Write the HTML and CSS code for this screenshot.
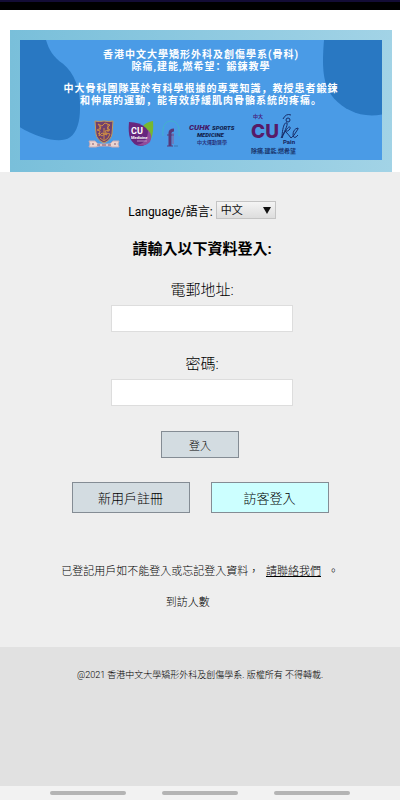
FILE: index.html
```html
<!DOCTYPE html>
<html lang="zh-Hant">
<head>
    <meta charset="UTF-8">
    <meta name="viewport" content="width=device-width, initial-scale=1.0">
    <title>登入</title>
    <link rel="stylesheet" href="styles.css">
</head>
<body>

    <div class="status-bar"></div>

    <!-- Banner -->
    <header class="banner">
        <div class="banner-inner">
            <svg class="banner-shapes" viewBox="0 0 362 121" preserveAspectRatio="none" aria-hidden="true">
                <path fill="#2978c2" d="M0 0H26C29 10 33 17 43 24C54 33 61 50 60 69C60 82 57 93 50 98C43 103 32 101 22 98C13 95 6 92 0 88Z"/>
                <path fill="#2978c2" d="M304 0H362V75C342 79 325 71 314 59C302 45 302 26 304 0Z"/>
            </svg>
            <p lang="zh-Hans">香港中文大學矯形外科及創傷學系(骨科)<br>除痛,建能,燃希望：鍛鍊教學</p>
            <p lang="zh-Hans">中大骨科團隊基於有科學根據的專業知識，教授患者鍛鍊<br>和伸展的運動，能有效紓緩肌肉骨骼系統的疼痛。</p>

            <div class="logos">
                <svg class="logo-crest" viewBox="0 0 32 28" role="img" aria-label="CUHK">
                    <path d="M7 1Q11 2 16 1Q21 2 25 1L24 14Q23 20 16 23Q9 20 8 14Z" fill="#70406d" stroke="#c39a5a"/>
                    <path d="M10 4l4 2 3-3 5 2-3 3 3 2-5 1 2 4-5-2-3 3 1-5-3-1 4-2zM10 13l4 3 4-3 4 1-2 4-4 3-4-3M12 5v5M20 4v8M16 8v12" fill="none" stroke="#cf8d43"/>
                    <path d="M1 21l6 0 3 3h12l3-3h6l-1 3 1 3-7 0-3-1H11l-3 1H1l1-3z" fill="#ead5d2" stroke="#c7acb6"/>
                    <path d="M4 24h2M9 25h3M14 25h4M20 25h3M26 24h2" stroke="#815671"/>
                </svg>
                <svg class="logo-medicine" viewBox="0 0 26 28" role="img" aria-label="CU Medicine">
                    <path d="M14 7Q18 2 25 1Q26 12 23 19Q20 24 14 25Z" fill="#76b82f"/>
                    <path d="M1 2Q12 2 18 8Q24 14 21 21Q18 26 12 26Q5 25 2 18Q0 12 1 2Z" fill="#67277e"/>
                    <path d="M20 10Q25 15 22 22Q17 27 9 25Q20 23 20 10Z" fill="#914b9b"/>
                    <text x="3" y="14" fill="#fff" font-size="9" font-weight="700">CU</text>
                    <text x="3" y="19" fill="#fff" font-size="4" font-weight="700">Medicine</text>
                    <path d="M9 21h10" stroke="#b78bc0"/>
                </svg>
                <svg class="logo-ortho" viewBox="0 0 18 28" fill="none" role="img" aria-label="Orthopaedics">
                    <path d="M1 16C0 5 4 1 9 1S18 5 17 16" stroke="#42b2cc"/>
                    <path d="M8 26V13Q8 10 12 10" stroke="#583879" stroke-width="3"/>
                    <path d="M5 15h7M5 26h6" stroke="#583879"/>
                    <path d="M11 13v11" stroke="#8c6199"/>
                    <path d="M12 26h4" stroke="#3977b2"/>
                </svg>
                <svg class="logo-sports" viewBox="0 0 48 24" role="img" aria-label="CUHK Sports Medicine">
                    <text x="1" y="8" fill="#451969" font-size="8" font-weight="900" font-style="italic">CUHK</text>
                    <text x="24" y="8" fill="#101d4c" font-size="6" font-weight="900" font-style="italic">SPORTS</text>
                    <text x="9" y="15" fill="#101d4c" font-size="6" font-weight="900" font-style="italic">MEDICINE</text>
                    <text x="9" y="22" fill="#293780" font-size="5" font-weight="700">中大運動醫學</text>
                </svg>
                <svg class="logo-cure" viewBox="0 0 52 42" role="img" aria-label="CURe Pain">
                    <text x="3" y="5" fill="#46257d" font-size="5" font-weight="700">中大</text>
                    <text class="cu" x="1" y="25" fill="#571a68" font-size="19" font-weight="800">CU</text>
                    <g fill="none" stroke="#172c68">
                        <path d="M33 6Q36 0 41 2M36 7q0-2 2-2t2 2-2 2-2-2"/>
                        <path d="M31 25C34 20 38 12 37 10C34 8 32 18 32 25C36 15 41 11 40 16Q38 19 35 18Q39 22 41 25Q44 23 46 19Q49 15 48 15Q43 16 43 22Q44 27 48 22"/>
                    </g>
                    <text x="33" y="31" fill="#14215a" font-size="6" font-weight="700">Pain</text>
                    <text x="1" y="40" fill="#19366e" font-size="6" font-weight="700">除痛,建能,燃希望</text>
                </svg>
            </div>
        </div>
    </header>

    <!-- Login form -->
    <main>
        <form class="login-form" id="login-form">
            <div class="language">
                <label for="language">Language/語言:</label>
                <div class="select-box">
                    <select id="language">
                        <option>中文</option>
                        <option>English</option>
                    </select>
                    <svg class="arrow" viewBox="0 0 8 8" aria-hidden="true"><path d="M0 1h8L4 8z" fill="#111"/></svg>
                </div>
            </div>

            <h1>請輸入以下資料登入:</h1>

            <label class="field-label" for="email">電郵地址:</label>
            <input type="email" id="email">

            <label class="field-label" for="password">密碼:</label>
            <input type="password" id="password">
        </form>

        <button type="submit" form="login-form" class="login">登入</button>

        <div class="actions">
            <button type="button">新用戶註冊</button>
            <button type="button" class="guest">訪客登入</button>
        </div>

        <p class="help">已登記用戶如不能登入或忘記登入資料， <a href="#">請聯絡我們</a> 。</p>
        <p class="visitors">到訪人數 <span class="count"></span></p>
    </main>

    <footer>@2021 香港中文大學矯形外科及創傷學系. 版權所有 不得轉載.</footer>

    <div class="nav-bar">
        <span></span>
        <span></span>
        <span></span>
    </div>

</body>
</html>
```
FILE: styles.css
```css
* {
    margin: 0;
    padding: 0;
    box-sizing: border-box;
}

body {
    font-family: Roboto, "Noto Sans CJK TC", sans-serif;
    font-weight: 300;
    background: #fff;
    color: #000;
    display: flex;
    flex-direction: column;
    min-height: 100vh;
}

.status-bar {
    height: 10px;
    background: #000;
    border-top: 2px solid #130c35;
}

/* Banner */
.banner {
    margin: 20px 8px 0 10px;
    padding: 10px 10px 12px;
    background: linear-gradient(to right, #79bfda, #a2d3e6);
}

.banner-inner {
    position: relative;
    padding-top: 9px;
    background: #4a9be6;
    color: #fff;
    text-align: center;
}

.banner-shapes {
    position: absolute;
    inset: 0;
    width: 100%;
    height: 100%;
}

.banner p {
    position: relative;
    margin-bottom: 10px;
    font-family: Roboto, "Noto Sans CJK SC", sans-serif;
    font-size: 10px;
    font-weight: 700;
    line-height: 12px;
    letter-spacing: 1px;
}

.logos {
    position: relative;
    display: flex;
    justify-content: center;
    align-items: center;
    gap: 8px;
    margin-top: -4px;
    padding: 0 12px 5px 0;
}

.logo-crest {
    width: 32px;
    height: 28px;
}

.logo-medicine {
    width: 26px;
    height: 28px;
}

.logo-ortho {
    width: 18px;
    height: 28px;
}

.logo-sports {
    width: 48px;
    height: 24px;
}

.logo-cure {
    width: 52px;
    height: 42px;
    margin-left: 6px;
}

.logo-cure .cu {
    font-family: Inter, sans-serif;
}

/* Login form */
main {
    background: #eee;
    padding: 29px 0 34px;
    text-align: center;
}

.login-form {
    display: flex;
    flex-direction: column;
    align-items: center;
    padding-left: 4px;
}

.language {
    display: flex;
    align-items: center;
    gap: 3px;
    font-size: 12px;
    font-weight: 400;
}

.select-box {
    position: relative;
}

select {
    appearance: none;
    display: block;
    width: 60px;
    height: 18px;
    padding-left: 4px;
    border: 1px solid #c4c4c4;
    border-radius: 0;
    background: linear-gradient(#f4f4f4, #ddd);
    color: #111;
    font-family: inherit;
    font-size: 11px;
}

.arrow {
    position: absolute;
    top: 5px;
    right: 5px;
    width: 8px;
    height: 8px;
    pointer-events: none;
}

h1 {
    margin: 18px 0 19px;
    font-size: 15px;
    font-weight: 700;
    line-height: 24px;
}

.field-label {
    font-size: 15px;
    line-height: 20px;
    margin-bottom: 5px;
}

input {
    width: 182px;
    height: 27px;
    margin-bottom: 22px;
    padding: 0 6px;
    border: 1px solid #ddd;
    background: #fff;
    font-size: 12px;
}

button {
    background: #d3dce1;
    border: 1px solid #848c94;
    color: #000;
    font-family: inherit;
    font-size: 13px;
    font-weight: 300;
    cursor: pointer;
}

.login {
    display: block;
    width: 78px;
    height: 27px;
    margin: 3px auto 0;
    font-size: 11px;
}

.actions {
    display: flex;
    justify-content: center;
    gap: 21px;
    margin: 24px 0 49px;
}

.actions button {
    width: 118px;
    height: 31px;
}

.actions .guest {
    background: #cff;
}

.help,
.visitors {
    font-size: 11px;
    line-height: 20px;
}

.help {
    margin-bottom: 11px;
}

.help a {
    margin: 0 4px;
    color: inherit;
}

.count {
    display: inline-block;
    width: 22px;
}

footer {
    flex: 1;
    padding-top: 20px;
    background: #e1e1e1;
    text-align: center;
    font-size: 9px;
    line-height: 16px;
}

/* Bottom navigation */
.nav-bar {
    display: flex;
    justify-content: center;
    align-items: center;
    gap: 9%;
    height: 14px;
    background: #f2f2f2;
}

.nav-bar span {
    width: 19%;
    height: 4px;
    border-radius: 2px;
    background: #b4b4b4;
}
```
